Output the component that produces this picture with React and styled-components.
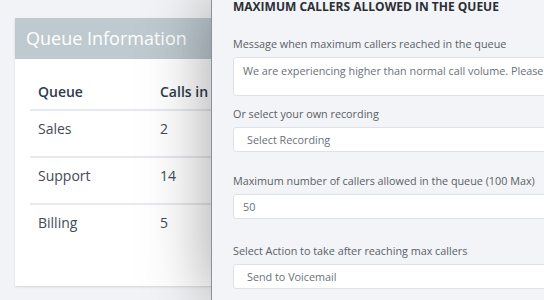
import styled, { createGlobalStyle } from 'styled-components'

const Global = createGlobalStyle`
  html, body {
    margin: 0;
    padding: 0;
    background: #f1f3f6;
    font-family: "Open Sans", "Liberation Sans", sans-serif;
  }
`

const Page = styled.div`
  position: relative;
  width: 544px;
  height: 300px;
  overflow: hidden;
  padding: 18px 0 0 15px;
  box-sizing: border-box;
`

const Card = styled.div`
  width: 300px;
  height: 268px;
  background: #fff;
  box-shadow: 0 1px 2px rgba(0, 0, 0, 0.12);
`

const CardHeader = styled.div`
  height: 41px;
  background: #bec9d0;
  color: #fff;
  font-size: 18px;
  line-height: 41px;
  padding-left: 11px;
`

const Table = styled.div`
  padding: 16px 15px 0 15px;
`

const Row = styled.div`
  display: grid;
  grid-template-columns: 122px 1fr;
  height: ${p => (p.head ? 36 : 45)}px;
  box-sizing: border-box;
  padding: ${p => (p.head ? 7 : 8)}px 0 0 8px;
  line-height: 20px;
  border-bottom: ${p => (p.last ? 'none' : '2px solid #e6e9ed')};
  color: ${p => (p.head ? '#2f3b4b' : '#434a55')};
  font-size: 14px;
  font-weight: ${p => (p.head ? 600 : 400)};
  & + & {
    height: 47px;
  }
`

const Drawer = styled.div`
  position: absolute;
  top: 0;
  left: 211px;
  right: 0;
  bottom: 0;
  background: #f2f4f7;
  border-left: 1px solid #8d9196;
  box-shadow: -4px 0 60px rgba(0, 0, 0, 0.34);
  padding: 0 0 0 21px;
  overflow: hidden;
`

const Heading = styled.div`
  font-size: 12px;
  line-height: 13px;
  font-weight: 700;
  color: #2b2f35;
  white-space: nowrap;
`

const Field = styled.div`
  margin-top: ${p => p.gap}px;
`

const Label = styled.div`
  font-size: 10.8px;
  line-height: 14px;
  color: #5a5f66;
  white-space: nowrap;
  margin-bottom: 6px;
`

const Box = styled.div`
  width: 340px;
  height: ${p => p.h}px;
  background: #fff;
  border: 1px solid #dde2e8;
  border-radius: 3px;
  box-sizing: border-box;
  padding: ${p => (p.tall ? '6px' : '0')} 0 0 ${p => p.indent}px;
  display: flex;
  align-items: ${p => (p.tall ? 'flex-start' : 'center')};
  font-size: 10.8px;
  line-height: 14px;
  color: #6a7079;
  white-space: nowrap;
  overflow: hidden;
`

const queues = [
  ['Sales', '2'],
  ['Support', '14'],
  ['Billing', '5'],
]

export default function App() {
  return (
    <>
      <Global />
      <Page>
        <Card>
          <CardHeader>Queue Information</CardHeader>
          <Table>
            <Row head>
              <span>Queue</span>
              <span>Calls in Queue</span>
            </Row>
            {queues.map(([name, calls], i) => (
              <Row key={name} last={i === queues.length - 1}>
                <span>{name}</span>
                <span>{calls}</span>
              </Row>
            ))}
          </Table>
        </Card>
        <Drawer>
          <Heading>MAXIMUM CALLERS ALLOWED IN THE QUEUE</Heading>
          <Field gap={24}>
            <Label>Message when maximum callers reached in the queue</Label>
            <Box h={39} tall indent={9}>
              We are experiencing higher than normal call volume. Please stay on the line.
            </Box>
          </Field>
          <Field gap={11}>
            <Label>Or select your own recording</Label>
            <Box h={25} indent={13}>Select Recording</Box>
          </Field>
          <Field gap={22}>
            <Label>Maximum number of callers allowed in the queue (100 Max)</Label>
            <Box h={25} indent={9}>50</Box>
          </Field>
          <Field gap={25}>
            <Label>Select Action to take after reaching max callers</Label>
            <Box h={25} indent={13}>Send to Voicemail</Box>
          </Field>
        </Drawer>
      </Page>
    </>
  )
}
